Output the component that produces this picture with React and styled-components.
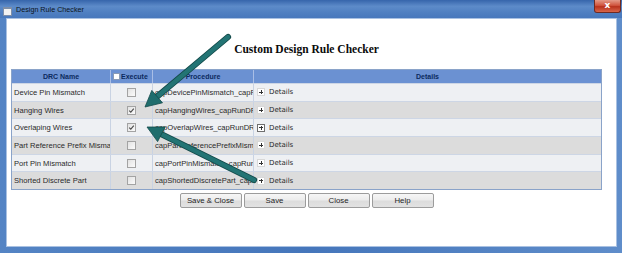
import React from "react";
import styled, { createGlobalStyle } from "styled-components";

const GlobalStyle = createGlobalStyle`
  html, body {
    margin: 0;
    padding: 0;
    background: #fff;
  }
  body {
    width: 624px;
    height: 253px;
    overflow: hidden;
    font-family: "Liberation Sans", Arial, sans-serif;
  }
`;

const Window = styled.div`
  position: relative;
  width: 622px;
  height: 253px;
  display: flex;
  flex-direction: column;
  background: linear-gradient(90deg, #5484c4, #4576bb 50%, #5f8dca);
`;

const TitleBar = styled.div`
  height: 18px;
  flex: none;
  display: flex;
  align-items: flex-start;
  background: linear-gradient(180deg, #3665ab 0%, #5d8bc9 35%, #4f7fc1 70%, #4878bc 100%);
`;

const TitleIcon = styled.div`
  width: 7px;
  height: 6px;
  margin: 7px 0 0 3px;
  background: #f2f2f2;
  border: 1px solid #7d8ea8;
  border-top-width: 2px;
`;

const TitleText = styled.div`
  margin-left: 4px;
  line-height: 19px;
  font-size: 7.2px;
  color: #0c1420;
`;

const CloseButton = styled.div`
  margin-left: auto;
  margin-right: 1px;
  width: 27px;
  height: 13px;
  box-sizing: border-box;
  border: 1px solid #6e2a22;
  border-top: none;
  border-radius: 0 0 3px 3px;
  background: linear-gradient(180deg, #e49a88 0%, #d0553e 45%, #b8321d 55%, #d8664a 100%);
  color: #fff;
  font-weight: bold;
  font-size: 9px;
  line-height: 11px;
  text-align: center;
  font-family: "DejaVu Sans", sans-serif;
`;

const Client = styled.div`
  flex: 1;
  margin: 0 5px 6px 6px;
  background: #fff;
  box-shadow: inset 0 0 0 1px #a9c1e2;
  padding: 23px 0 0 5px;
  box-sizing: border-box;
`;

const Heading = styled.h1`
  width: 591px;
  margin: 0 0 12px;
  text-align: center;
  font-family: "Liberation Serif", "Times New Roman", serif;
  font-weight: bold;
  font-size: 11.5px;
  line-height: 16px;
  color: #0a0a0a;
`;

const Table = styled.div`
  width: 591px;
  box-sizing: border-box;
  border: 1px solid #8aa3c9;
`;

const columns = "99px 42px 101px 1fr";

const HeadRow = styled.div`
  display: grid;
  grid-template-columns: ${columns};
  height: 13px;
  background: #6b91d2;
`;

const HeadCell = styled.div`
  display: flex;
  align-items: center;
  justify-content: ${({ $left }) => ($left ? "flex-start" : "center")};
  padding-left: ${({ $left }) => ($left ? "2px" : "0")};
  border-right: ${({ $last }) => ($last ? "none" : "1px solid #a9bee6")};
  font-size: 7px;
  font-weight: bold;
  color: #0b2a5e;
  white-space: nowrap;
  overflow: hidden;
`;

const Row = styled.div`
  display: grid;
  grid-template-columns: ${columns};
  height: 17.7px;
  box-sizing: border-box;
  background: ${({ $alt }) => ($alt ? "#dcdcdc" : "#eef0f3")};
  border-top: 1px solid #cdd6e5;
`;

const Cell = styled.div`
  display: flex;
  align-items: center;
  justify-content: ${({ $center }) => ($center ? "center" : "flex-start")};
  padding-left: ${({ $center }) => ($center ? "0" : "2px")};
  border-right: ${({ $last }) => ($last ? "none" : "1px solid #c9d3e3")};
  font-size: 7.6px;
  color: #2a2a2a;
  white-space: nowrap;
  overflow: hidden;
`;

const CheckBox = styled.span`
  width: 9px;
  height: 9px;
  box-sizing: border-box;
  border: 1px solid #a3a3a3;
  background: linear-gradient(135deg, #e2e2e2, #fbfbfb);
  display: flex;
  align-items: center;
  justify-content: center;
`;

const HeadCheck = styled.span`
  width: 7px;
  height: 7px;
  box-sizing: border-box;
  border: 1px solid #8a9ab5;
  background: #fff;
  margin-right: 1px;
  flex: none;
`;

const PlusBox = styled.span`
  position: relative;
  flex: none;
  width: 8px;
  height: 8px;
  box-sizing: border-box;
  border: 1px solid ${({ $focus }) => ($focus ? "#6f6f6f" : "#d8d8d8")};
  background: #fff;
  margin: 0 4px 0 1px;

  &::before,
  &::after {
    content: "";
    position: absolute;
    background: #333;
  }
  &::before {
    left: 1px;
    right: 1px;
    top: 2.5px;
    height: 1px;
  }
  &::after {
    top: 1px;
    bottom: 1px;
    left: 2.5px;
    width: 1px;
  }
`;

const DetailsText = styled.span`
  font-family: "DejaVu Sans", Tahoma, sans-serif;
  font-size: 7px;
  color: #2a2a2a;
`;

const ButtonRow = styled.div`
  width: 591px;
  margin-top: 3px;
  display: flex;
  justify-content: center;
  gap: 2px;
`;

const Button = styled.button`
  width: 62px;
  height: 15px;
  padding: 0;
  border: 1px solid #9c9c9c;
  border-radius: 2px;
  background: linear-gradient(180deg, #f6f6f6 0%, #ececec 48%, #dcdcdc 52%, #e2e2e2 100%);
  font-family: "Liberation Sans", Arial, sans-serif;
  font-size: 7.8px;
  color: #1e1e1e;
`;

const Overlay = styled.svg`
  position: absolute;
  left: 0;
  top: 0;
  width: 624px;
  height: 253px;
  pointer-events: none;
`;

const rules = [
  { name: "Device Pin Mismatch", proc: "capDevicePinMismatch_capRunDRC", on: false },
  { name: "Hanging Wires", proc: "capHangingWires_capRunDRC", on: true },
  { name: "Overlaping Wires", proc: "capOverlapWires_capRunDRC", on: true, focus: true },
  { name: "Part Reference Prefix Mismatch", proc: "capPartReferencePrefixMismatch", on: false },
  { name: "Port Pin Mismatch", proc: "capPortPinMismatch_capRunDRC", on: false },
  { name: "Shorted Discrete Part", proc: "capShortedDiscretePart_capRunDRC", on: false },
];

const Check = () => (
  <svg width="7" height="7" viewBox="0 0 7 7">
    <path d="M1.2 3.6 L2.8 5.2 L5.8 1.6" fill="none" stroke="#4a4a4a" strokeWidth="1.1" />
  </svg>
);

const Arrow = ({ tail, base, head }) => (
  <g>
    <line x1={tail[0]} y1={tail[1]} x2={base[0]} y2={base[1]} stroke="#134a4a" strokeWidth="6.2" strokeLinecap="round" />
    <line x1={tail[0]} y1={tail[1]} x2={base[0]} y2={base[1]} stroke="#237474" strokeWidth="4.4" strokeLinecap="round" />
    <polygon points={head} fill="#1f6d6d" stroke="#134a4a" strokeWidth="0.8" strokeLinejoin="round" />
  </g>
);

export default function App() {
  return (
    <>
      <GlobalStyle />
      <Window>
        <TitleBar>
          <TitleIcon />
          <TitleText>Design Rule Checker</TitleText>
          <CloseButton>x</CloseButton>
        </TitleBar>
        <Client>
          <Heading>Custom Design Rule Checker</Heading>
          <Table>
            <HeadRow>
              <HeadCell>DRC Name</HeadCell>
              <HeadCell $left>
                <HeadCheck />
                Execute
              </HeadCell>
              <HeadCell>Procedure</HeadCell>
              <HeadCell $last>Details</HeadCell>
            </HeadRow>
            {rules.map((r, i) => (
              <Row key={r.name} $alt={i % 2 === 1}>
                <Cell>{r.name}</Cell>
                <Cell $center>
                  <CheckBox>{r.on && <Check />}</CheckBox>
                </Cell>
                <Cell>{r.proc}</Cell>
                <Cell $last>
                  <PlusBox $focus={r.focus} />
                  <DetailsText>Details</DetailsText>
                </Cell>
              </Row>
            ))}
          </Table>
          <ButtonRow>
            <Button>Save &amp; Close</Button>
            <Button>Save</Button>
            <Button>Close</Button>
            <Button>Help</Button>
          </ButtonRow>
        </Client>
        <Overlay viewBox="0 0 624 253">
          <Arrow tail={[228, 37]} base={[157, 96.7]} head="145,107 162.5,102.8 151.8,90.4" />
          <Arrow tail={[254, 180]} base={[161, 134]} head="147,127 165.2,127 157.6,141.6" />
        </Overlay>
      </Window>
    </>
  );
}
